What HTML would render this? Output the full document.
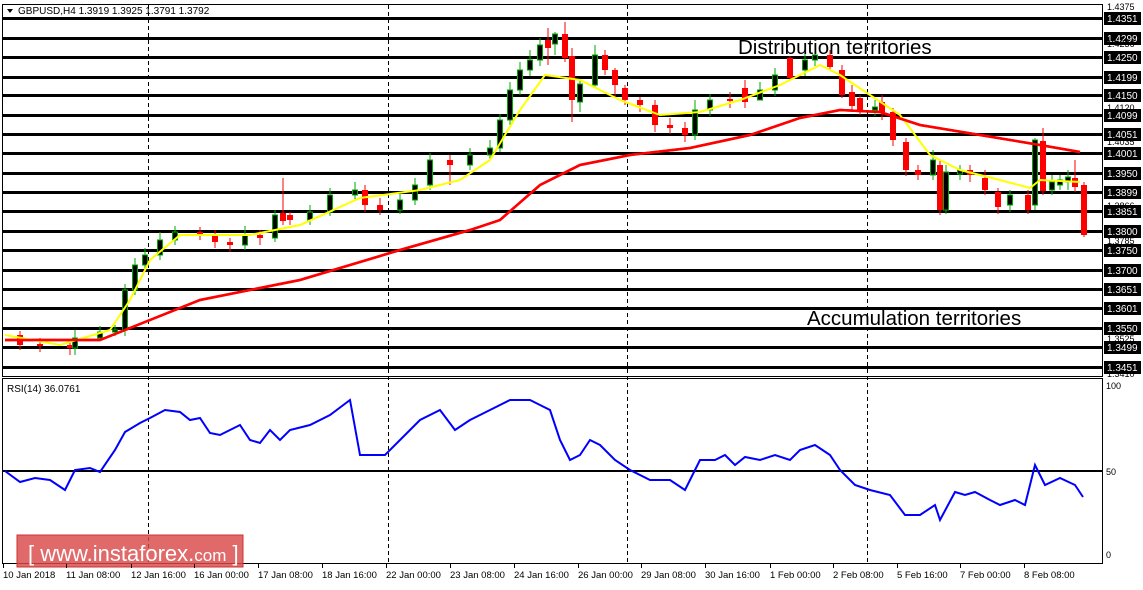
<!DOCTYPE html><html><head><meta charset="utf-8"><style>
body{margin:0;background:#fff;width:1143px;height:585px;overflow:hidden}
svg text{font-family:"Liberation Sans",sans-serif}
</style></head><body>
<svg width="1143" height="585" xmlns="http://www.w3.org/2000/svg">
<rect x="2.5" y="4.5" width="1100" height="372" fill="none" stroke="#000"/>
<rect x="2.5" y="378.5" width="1100" height="185" fill="none" stroke="#000"/>
<g stroke="#000" stroke-dasharray="4,3">
<line x1="148.5" y1="5" x2="148.5" y2="563"/><line x1="388.5" y1="5" x2="388.5" y2="563"/><line x1="627.5" y1="5" x2="627.5" y2="563"/><line x1="867.5" y1="5" x2="867.5" y2="563"/>
</g>
<g fill="#000">
<rect x="3" y="17" width="1100" height="3"/><rect x="3" y="37" width="1100" height="3"/><rect x="3" y="56" width="1100" height="3"/><rect x="3" y="76" width="1100" height="3"/><rect x="3" y="94" width="1100" height="3"/><rect x="3" y="114" width="1100" height="3"/><rect x="3" y="133" width="1100" height="3"/><rect x="3" y="152" width="1100" height="3"/><rect x="3" y="172" width="1100" height="3"/><rect x="3" y="191" width="1100" height="3"/><rect x="3" y="210" width="1100" height="3"/><rect x="3" y="230" width="1100" height="3"/><rect x="3" y="249" width="1100" height="3"/><rect x="3" y="269" width="1100" height="3"/><rect x="3" y="288" width="1100" height="3"/><rect x="3" y="307" width="1100" height="3"/><rect x="3" y="327" width="1100" height="3"/><rect x="3" y="346" width="1100" height="3"/><rect x="3" y="366" width="1100" height="3"/>
</g>
<g fill="#000">
<rect x="1104" y="12" width="37" height="13"/><rect x="1104" y="32" width="37" height="13"/><rect x="1104" y="51" width="37" height="13"/><rect x="1104" y="71" width="37" height="13"/><rect x="1104" y="89" width="37" height="13"/><rect x="1104" y="109" width="37" height="13"/><rect x="1104" y="128" width="37" height="13"/><rect x="1104" y="147" width="37" height="13"/><rect x="1104" y="167" width="37" height="13"/><rect x="1104" y="186" width="37" height="13"/><rect x="1104" y="205" width="37" height="13"/><rect x="1104" y="225" width="37" height="13"/><rect x="1104" y="244" width="37" height="13"/><rect x="1104" y="264" width="37" height="13"/><rect x="1104" y="283" width="37" height="13"/><rect x="1104" y="302" width="37" height="13"/><rect x="1104" y="322" width="37" height="13"/><rect x="1104" y="341" width="37" height="13"/><rect x="1104" y="361" width="37" height="13"/>
</g>
<g fill="#fff" font-size="10">
<text x="1107" y="22">1.4351</text><text x="1107" y="42">1.4299</text><text x="1107" y="61">1.4250</text><text x="1107" y="81">1.4199</text><text x="1107" y="99">1.4150</text><text x="1107" y="119">1.4099</text><text x="1107" y="138">1.4051</text><text x="1107" y="157">1.4001</text><text x="1107" y="177">1.3950</text><text x="1107" y="196">1.3899</text><text x="1107" y="215">1.3851</text><text x="1107" y="235">1.3800</text><text x="1107" y="254">1.3750</text><text x="1107" y="274">1.3700</text><text x="1107" y="293">1.3651</text><text x="1107" y="312">1.3601</text><text x="1107" y="332">1.3550</text><text x="1107" y="351">1.3499</text><text x="1107" y="371">1.3451</text>
</g>
<g fill="#000" font-size="9">
<text x="1107" y="10">1.4375</text><text x="1107" y="47">1.4236</text><text x="1107" y="111">1.4120</text><text x="1107" y="145">1.4035</text><text x="1107" y="209">1.3866</text><text x="1107" y="244">1.3785</text><text x="1107" y="342">1.3525</text><text x="1107" y="377">1.3410</text>
</g>
<polyline fill="none" stroke="#f00" stroke-width="2.5" points="5,340 100,340 150,320 200,300 300,280 400,250 470,230 500,220 540,185 580,165 630,155 690,148 750,135 800,118 840,110 880,112 920,125 980,135 1040,145 1080,152"/>
<g stroke="#0a0">
<line x1="20" y1="331" x2="20" y2="350" stroke="#f00"/><rect x="17" y="335" width="6" height="10" fill="#f00" stroke="none"/>
<line x1="40" y1="338" x2="40" y2="352" stroke="#f00"/><rect x="37" y="344" width="6" height="2" fill="#f00" stroke="none"/>
<line x1="70" y1="340" x2="70" y2="355" stroke="#f00"/><rect x="67" y="345" width="6" height="3" fill="#f00" stroke="none"/>
<line x1="75" y1="330" x2="75" y2="355"/><rect x="72.5" y="338" width="5" height="10" fill="#000"/>
<line x1="100" y1="326" x2="100" y2="340"/><rect x="97.5" y="332" width="5" height="6" fill="#000"/>
<line x1="115" y1="325" x2="115" y2="336"/><rect x="112.5" y="330" width="5" height="2" fill="#000"/>
<line x1="125" y1="284" x2="125" y2="336"/><rect x="122.5" y="290" width="5" height="40" fill="#000"/>
<line x1="135" y1="258" x2="135" y2="295"/><rect x="132.5" y="265" width="5" height="25" fill="#000"/>
<line x1="145" y1="248" x2="145" y2="270"/><rect x="142.5" y="255" width="5" height="10" fill="#000"/>
<line x1="160" y1="232" x2="160" y2="260"/><rect x="157.5" y="240" width="5" height="15" fill="#000"/>
<line x1="175" y1="226" x2="175" y2="245"/><rect x="172.5" y="232" width="5" height="8" fill="#000"/>
<line x1="200" y1="227" x2="200" y2="240" stroke="#f00"/><rect x="197" y="232" width="6" height="3" fill="#f00" stroke="none"/>
<line x1="215" y1="230" x2="215" y2="248" stroke="#f00"/><rect x="212" y="235" width="6" height="7" fill="#f00" stroke="none"/>
<line x1="230" y1="238" x2="230" y2="252" stroke="#f00"/><rect x="227" y="242" width="6" height="3" fill="#f00" stroke="none"/>
<line x1="245" y1="226" x2="245" y2="250"/><rect x="242.5" y="235" width="5" height="10" fill="#000"/>
<line x1="260" y1="230" x2="260" y2="245" stroke="#f00"/><rect x="257" y="235" width="6" height="3" fill="#f00" stroke="none"/>
<line x1="275" y1="210" x2="275" y2="242"/><rect x="272.5" y="215" width="5" height="23" fill="#000"/>
<line x1="283" y1="178" x2="283" y2="225" stroke="#f00"/><rect x="280" y="213" width="6" height="8" fill="#f00" stroke="none"/>
<line x1="290" y1="212" x2="290" y2="225" stroke="#f00"/><rect x="287" y="215" width="6" height="5" fill="#f00" stroke="none"/>
<line x1="310" y1="205" x2="310" y2="225"/><rect x="307.5" y="212" width="5" height="8" fill="#000"/>
<line x1="330" y1="188" x2="330" y2="216"/><rect x="327.5" y="195" width="5" height="17" fill="#000"/>
<line x1="355" y1="182" x2="355" y2="199"/><rect x="352.5" y="190" width="5" height="5" fill="#000"/>
<line x1="365" y1="185" x2="365" y2="212" stroke="#f00"/><rect x="362" y="190" width="6" height="15" fill="#f00" stroke="none"/>
<line x1="380" y1="198" x2="380" y2="215" stroke="#f00"/><rect x="377" y="205" width="6" height="5" fill="#f00" stroke="none"/>
<line x1="400" y1="194" x2="400" y2="214"/><rect x="397.5" y="200" width="5" height="10" fill="#000"/>
<line x1="415" y1="178" x2="415" y2="205"/><rect x="412.5" y="185" width="5" height="15" fill="#000"/>
<line x1="430" y1="153" x2="430" y2="190"/><rect x="427.5" y="160" width="5" height="25" fill="#000"/>
<line x1="450" y1="155" x2="450" y2="185" stroke="#f00"/><rect x="447" y="160" width="6" height="5" fill="#f00" stroke="none"/>
<line x1="470" y1="148" x2="470" y2="170"/><rect x="467.5" y="155" width="5" height="10" fill="#000"/>
<line x1="490" y1="140" x2="490" y2="160"/><rect x="487.5" y="148" width="5" height="7" fill="#000"/>
<line x1="500" y1="114" x2="500" y2="152"/><rect x="497.5" y="120" width="5" height="28" fill="#000"/>
<line x1="510" y1="82" x2="510" y2="125"/><rect x="507.5" y="90" width="5" height="30" fill="#000"/>
<line x1="520" y1="62" x2="520" y2="95"/><rect x="517.5" y="70" width="5" height="20" fill="#000"/>
<line x1="530" y1="50" x2="530" y2="76"/><rect x="527.5" y="60" width="5" height="10" fill="#000"/>
<line x1="540" y1="38" x2="540" y2="66"/><rect x="537.5" y="45" width="5" height="15" fill="#000"/>
<line x1="548" y1="28" x2="548" y2="65" stroke="#f00"/><rect x="545" y="40" width="6" height="8" fill="#f00" stroke="none"/>
<line x1="555" y1="32" x2="555" y2="55"/><rect x="552.5" y="34" width="5" height="10" fill="#000"/>
<line x1="565" y1="22" x2="565" y2="62" stroke="#f00"/><rect x="562" y="34" width="6" height="24" fill="#f00" stroke="none"/>
<line x1="572" y1="48" x2="572" y2="122" stroke="#f00"/><rect x="569" y="56" width="6" height="44" fill="#f00" stroke="none"/>
<line x1="580" y1="80" x2="580" y2="112"/><rect x="577.5" y="84" width="5" height="18" fill="#000"/>
<line x1="595" y1="45" x2="595" y2="88"/><rect x="592.5" y="55" width="5" height="30" fill="#000"/>
<line x1="605" y1="50" x2="605" y2="75" stroke="#f00"/><rect x="602" y="55" width="6" height="15" fill="#f00" stroke="none"/>
<line x1="615" y1="68" x2="615" y2="98" stroke="#f00"/><rect x="612" y="70" width="6" height="15" fill="#f00" stroke="none"/>
<line x1="625" y1="85" x2="625" y2="105" stroke="#f00"/><rect x="622" y="88" width="6" height="12" fill="#f00" stroke="none"/>
<line x1="640" y1="97" x2="640" y2="112" stroke="#f00"/><rect x="637" y="100" width="6" height="5" fill="#f00" stroke="none"/>
<line x1="655" y1="100" x2="655" y2="132" stroke="#f00"/><rect x="652" y="105" width="6" height="20" fill="#f00" stroke="none"/>
<line x1="670" y1="118" x2="670" y2="134" stroke="#f00"/><rect x="667" y="125" width="6" height="3" fill="#f00" stroke="none"/>
<line x1="685" y1="122" x2="685" y2="142" stroke="#f00"/><rect x="682" y="128" width="6" height="7" fill="#f00" stroke="none"/>
<line x1="695" y1="100" x2="695" y2="140"/><rect x="692.5" y="110" width="5" height="25" fill="#000"/>
<line x1="710" y1="94" x2="710" y2="116"/><rect x="707.5" y="100" width="5" height="10" fill="#000"/>
<line x1="730" y1="92" x2="730" y2="108" stroke="#f00"/><rect x="727" y="99" width="6" height="2" fill="#f00" stroke="none"/>
<line x1="745" y1="80" x2="745" y2="108" stroke="#f00"/><rect x="742" y="88" width="6" height="14" fill="#f00" stroke="none"/>
<line x1="760" y1="82" x2="760" y2="98"/><rect x="757.5" y="90" width="5" height="10" fill="#000"/>
<line x1="775" y1="68" x2="775" y2="96"/><rect x="772.5" y="75" width="5" height="15" fill="#000"/>
<line x1="790" y1="56" x2="790" y2="80" stroke="#f00"/><rect x="787" y="58" width="6" height="20" fill="#f00" stroke="none"/>
<line x1="805" y1="52" x2="805" y2="76"/><rect x="802.5" y="60" width="5" height="10" fill="#000"/>
<line x1="815" y1="48" x2="815" y2="66"/><rect x="812.5" y="55" width="5" height="5" fill="#000"/>
<line x1="830" y1="50" x2="830" y2="70" stroke="#f00"/><rect x="827" y="55" width="6" height="12" fill="#f00" stroke="none"/>
<line x1="842" y1="65" x2="842" y2="98" stroke="#f00"/><rect x="839" y="70" width="6" height="25" fill="#f00" stroke="none"/>
<line x1="852" y1="85" x2="852" y2="112" stroke="#f00"/><rect x="849" y="92" width="6" height="14" fill="#f00" stroke="none"/>
<line x1="860" y1="95" x2="860" y2="115" stroke="#f00"/><rect x="857" y="98" width="6" height="12" fill="#f00" stroke="none"/>
<line x1="875" y1="100" x2="875" y2="116"/><rect x="872.5" y="107" width="5" height="3" fill="#000"/>
<line x1="882" y1="95" x2="882" y2="120" stroke="#f00"/><rect x="879" y="102" width="6" height="10" fill="#f00" stroke="none"/>
<line x1="893" y1="108" x2="893" y2="146" stroke="#f00"/><rect x="890" y="112" width="6" height="28" fill="#f00" stroke="none"/>
<line x1="906" y1="138" x2="906" y2="176" stroke="#f00"/><rect x="903" y="142" width="6" height="28" fill="#f00" stroke="none"/>
<line x1="918" y1="165" x2="918" y2="180" stroke="#f00"/><rect x="915" y="170" width="6" height="5" fill="#f00" stroke="none"/>
<line x1="933" y1="150" x2="933" y2="180"/><rect x="930.5" y="160" width="5" height="15" fill="#000"/>
<line x1="940" y1="160" x2="940" y2="215" stroke="#f00"/><rect x="937" y="165" width="6" height="45" fill="#f00" stroke="none"/>
<line x1="946" y1="165" x2="946" y2="214"/><rect x="943.5" y="172" width="5" height="38" fill="#000"/>
<line x1="960" y1="165" x2="960" y2="180"/><rect x="957.5" y="170" width="5" height="4" fill="#000"/>
<line x1="970" y1="165" x2="970" y2="182" stroke="#f00"/><rect x="967" y="170" width="6" height="5" fill="#f00" stroke="none"/>
<line x1="985" y1="170" x2="985" y2="195" stroke="#f00"/><rect x="982" y="178" width="6" height="12" fill="#f00" stroke="none"/>
<line x1="998" y1="188" x2="998" y2="214" stroke="#f00"/><rect x="995" y="192" width="6" height="15" fill="#f00" stroke="none"/>
<line x1="1010" y1="190" x2="1010" y2="212"/><rect x="1007.5" y="195" width="5" height="10" fill="#000"/>
<line x1="1028" y1="190" x2="1028" y2="214" stroke="#f00"/><rect x="1025" y="195" width="6" height="15" fill="#f00" stroke="none"/>
<line x1="1035" y1="138" x2="1035" y2="210"/><rect x="1032.5" y="140" width="5" height="65" fill="#000"/>
<line x1="1043" y1="128" x2="1043" y2="195" stroke="#f00"/><rect x="1040" y="141" width="6" height="50" fill="#f00" stroke="none"/>
<line x1="1052" y1="175" x2="1052" y2="195"/><rect x="1049.5" y="182" width="5" height="8" fill="#000"/>
<line x1="1060" y1="175" x2="1060" y2="190"/><rect x="1057.5" y="180" width="5" height="5" fill="#000"/>
<line x1="1068" y1="170" x2="1068" y2="190"/><rect x="1065.5" y="177" width="5" height="5" fill="#000"/>
<line x1="1075" y1="160" x2="1075" y2="192" stroke="#f00"/><rect x="1072" y="178" width="6" height="9" fill="#f00" stroke="none"/>
<line x1="1084" y1="182" x2="1084" y2="237" stroke="#f00"/><rect x="1081" y="185" width="6" height="50" fill="#f00" stroke="none"/>
</g>
<polyline fill="none" stroke="#ff0" stroke-width="2" points="5,335 60,345 110,330 130,300 150,260 180,235 250,235 300,225 360,198 420,190 460,180 490,160 520,110 545,75 580,80 620,100 660,115 700,112 740,100 780,85 820,65 840,75 870,95 900,115 930,155 960,170 1000,180 1030,188 1040,180 1080,182"/>
<polyline fill="none" stroke="#f00" stroke-width="2.5" points="5,340 100,340 150,320 200,300 300,280 400,250 470,230 500,220 540,185 580,165 630,155 690,148 750,135 800,118 840,110 880,112 920,125 980,135 1040,145 1080,152"/>
<text x="738" y="54" font-size="20.5" fill="#000">Distribution territories</text>
<text x="807" y="325" font-size="20.5" fill="#000">Accumulation territories</text>
<path d="M7,9 L13,9 L10,13Z" fill="#000"/>
<text x="18" y="14" font-size="10" fill="#000">GBPUSD,H4  1.3919 1.3925 1.3791 1.3792</text>
<rect x="3" y="470" width="1100" height="2" fill="#000"/>
<text x="7" y="392" font-size="10" fill="#000">RSI(14) 36.0761</text>
<text x="1106" y="389" font-size="9">100</text><text x="1106" y="475" font-size="9">50</text><text x="1106" y="558" font-size="9">0</text>
<polyline fill="none" stroke="#00f" stroke-width="2" points="5,471 20,482 35,478 50,480 65,490 75,470 90,468 100,472 115,450 125,432 140,423 150,418 165,410 180,412 190,420 200,418 210,433 220,435 230,430 240,425 250,440 260,443 270,430 280,440 290,430 310,425 330,415 350,400 360,455 385,455 400,440 420,420 440,410 455,430 470,420 490,410 510,400 530,400 540,405 550,410 560,440 570,460 580,455 590,440 600,445 615,460 630,470 650,480 670,480 685,490 700,460 715,460 725,455 735,465 745,457 760,460 775,455 790,460 800,450 815,445 830,455 840,470 855,485 870,490 890,495 905,515 920,515 935,505 940,520 955,492 965,495 975,492 990,500 1000,505 1015,500 1025,505 1035,465 1045,485 1060,478 1075,485 1083,497"/>
<rect x="17" y="535" width="226" height="32" fill="#d94848" fill-opacity="0.82" stroke="#c33"/>
<text x="28" y="561" font-size="22" fill="#fff">[  www.instaforex.<tspan font-size="17">com</tspan> ]</text>
<g stroke="#000">
<line x1="3.5" y1="564" x2="3.5" y2="568"/><line x1="66.5" y1="564" x2="66.5" y2="568"/><line x1="131.5" y1="564" x2="131.5" y2="568"/><line x1="194.5" y1="564" x2="194.5" y2="568"/><line x1="258.5" y1="564" x2="258.5" y2="568"/><line x1="322.5" y1="564" x2="322.5" y2="568"/><line x1="386.5" y1="564" x2="386.5" y2="568"/><line x1="450.5" y1="564" x2="450.5" y2="568"/><line x1="514.5" y1="564" x2="514.5" y2="568"/><line x1="578.5" y1="564" x2="578.5" y2="568"/><line x1="641.5" y1="564" x2="641.5" y2="568"/><line x1="705.5" y1="564" x2="705.5" y2="568"/><line x1="770.5" y1="564" x2="770.5" y2="568"/><line x1="833.5" y1="564" x2="833.5" y2="568"/><line x1="897.5" y1="564" x2="897.5" y2="568"/><line x1="960.5" y1="564" x2="960.5" y2="568"/><line x1="1024.5" y1="564" x2="1024.5" y2="568"/>
</g>
<g font-size="9.5" fill="#000">
<text x="3" y="578">10 Jan 2018</text><text x="66" y="578">11 Jan 08:00</text><text x="131" y="578">12 Jan 16:00</text><text x="194" y="578">16 Jan 00:00</text><text x="258" y="578">17 Jan 08:00</text><text x="322" y="578">18 Jan 16:00</text><text x="386" y="578">22 Jan 00:00</text><text x="450" y="578">23 Jan 08:00</text><text x="514" y="578">24 Jan 16:00</text><text x="578" y="578">26 Jan 00:00</text><text x="641" y="578">29 Jan 08:00</text><text x="705" y="578">30 Jan 16:00</text><text x="770" y="578">1 Feb 00:00</text><text x="833" y="578">2 Feb 08:00</text><text x="897" y="578">5 Feb 16:00</text><text x="960" y="578">7 Feb 00:00</text><text x="1024" y="578">8 Feb 08:00</text>
</g>
</svg>
</body></html>
